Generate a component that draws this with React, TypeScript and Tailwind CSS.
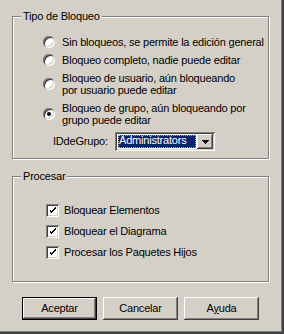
import React from "react"

const raised =
  "shadow-[inset_-1px_-1px_#404040,inset_1px_1px_#ffffff,inset_-2px_-2px_#808080,inset_2px_2px_#d4d0c8]"
const sunken =
  "shadow-[inset_1px_1px_#808080,inset_-1px_-1px_#ffffff,inset_2px_2px_#404040,inset_-2px_-2px_#d4d0c8]"

function GroupBox({ title, className, children }: { title: string; className: string; children: React.ReactNode }) {
  return (
    <div className={`relative ml-[12px] w-[257px] border border-[#808080] shadow-[1px_1px_0_#ffffff,inset_1px_1px_0_#ffffff] ${className}`}>
      <span className="absolute -top-[8px] left-[8px] bg-[#d4d0c8] px-[2px] leading-[14px]">{title}</span>
      {children}
    </div>
  )
}

function Radio({ checked, lines }: { checked?: boolean; lines: string[] }) {
  return (
    <div className="flex items-center gap-[7px]">
      <span className={`relative w-[12px] h-[12px] shrink-0 rounded-full bg-white ${sunken}`}>
        {checked && <span className="absolute left-[4px] top-[4px] w-[4px] h-[4px] rounded-full bg-black" />}
      </span>
      <div className="leading-[12px] whitespace-nowrap">
        {lines.map((l) => (
          <div key={l}>{l}</div>
        ))}
      </div>
    </div>
  )
}

function Check({ label }: { label: string }) {
  return (
    <div className="flex items-center gap-[5px] h-[13px]">
      <span className={`flex items-center justify-center w-[13px] h-[13px] shrink-0 bg-white ${sunken}`}>
        <svg width="7" height="7" viewBox="0 0 7 7" shapeRendering="crispEdges">
          <path d="M0 2h1v3h1v1h1v-1h1v-1h1v-1h1v-1h1v-2h-1v1h-1v1h-1v1h-1v1h-1v-1h-1v-1h-1z" fill="#000" />
        </svg>
      </span>
      <span className="whitespace-nowrap">{label}</span>
    </div>
  )
}

export default function App() {
  return (
    <div
      className="relative w-[284px] h-[334px] overflow-hidden bg-[#d4d0c8] text-[11px] tracking-[-0.2px] text-black shadow-[inset_-1px_-1px_#404040,inset_-2px_-2px_#404040,inset_-3px_-3px_#808080]"
      style={{ fontFamily: '"Liberation Sans", Arial, sans-serif' }}
    >
      <div className="pt-[16px]">
        <GroupBox title="Tipo de Bloqueo" className="h-[143px]">
          <div className="flex flex-col gap-[6px] pl-[30px] pt-[19px]">
            <Radio lines={["Sin bloqueos, se permite la edición general"]} />
            <Radio lines={["Bloqueo completo, nadie puede editar"]} />
            <Radio lines={["Bloqueo de usuario, aún bloqueando", "por usuario puede editar"]} />
            <Radio checked lines={["Bloqueo de grupo, aún bloqueando por", "grupo puede editar"]} />
            <div className="flex items-center ml-[10px]">
              <span className="w-[62px] whitespace-nowrap">IDdeGrupo:</span>
              <div className={`flex items-center w-[100px] h-[19px] bg-white p-[2px] ${sunken}`}>
                <div className="flex-1 h-full p-[1px] bg-white">
                  <div className="h-full bg-[#0a246a] text-white leading-[11px] pl-[1px] outline outline-1 outline-dotted outline-[#c8b46a] -outline-offset-1">
                    Administrators
                  </div>
                </div>
                <div className={`flex items-center justify-center w-[16px] h-[15px] bg-[#d4d0c8] ${raised}`}>
                  <svg width="7" height="4" viewBox="0 0 7 4" shapeRendering="crispEdges">
                    <path d="M0 0h7v1h-1v1h-1v1h-1v1h-1v-1h-1v-1h-1v-1h-1z" fill="#000" />
                  </svg>
                </div>
              </div>
            </div>
          </div>
        </GroupBox>

        <GroupBox title="Procesar" className="mt-[17px] h-[106px]">
          <div className="flex flex-col gap-[8px] pl-[33px] pt-[27px]">
            <Check label="Bloquear Elementos" />
            <Check label="Bloquear el Diagrama" />
            <Check label="Procesar los Paquetes Hijos" />
          </div>
        </GroupBox>

        <div className="flex gap-[6px] ml-[22px] mt-[15px]">
          <button className="w-[75px] h-[23px] border border-black bg-[#d4d0c8] shadow-[inset_-1px_-1px_#404040,inset_1px_1px_#ffffff,inset_-2px_-2px_#808080]">
            Aceptar
          </button>
          <button className={`w-[75px] h-[23px] bg-[#d4d0c8] ${raised}`}>Cancelar</button>
          <button className={`w-[75px] h-[23px] bg-[#d4d0c8] ${raised}`}>
            A<span className="underline">y</span>uda
          </button>
        </div>
      </div>
    </div>
  )
}
